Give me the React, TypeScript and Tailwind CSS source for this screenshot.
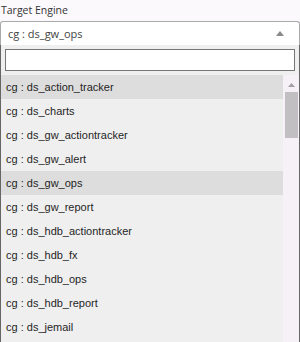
const items = [
  'cg : ds_action_tracker',
  'cg : ds_charts',
  'cg : ds_gw_actiontracker',
  'cg : ds_gw_alert',
  'cg : ds_gw_ops',
  'cg : ds_gw_report',
  'cg : ds_hdb_actiontracker',
  'cg : ds_hdb_fx',
  'cg : ds_hdb_ops',
  'cg : ds_hdb_report',
  'cg : ds_jemail',
];

export default function App() {
  return (
    <div className="flex h-[342px] w-[300px] flex-col overflow-hidden bg-[#fcf9fc]">
      {/* Label */}
      <div className="h-[21px] pl-[1px] pt-[2px] text-[10.5px] leading-[16px] text-[#333]" style={{ fontFamily: '"Open Sans", "Noto Sans", sans-serif' }}>
        Target Engine
      </div>

      {/* Select box */}
      <div className="flex h-[24px] flex-none items-center justify-between rounded-t-[3px] border border-b-0 border-[#aaa] bg-white pl-[7px] pr-[15px]">
        <span className="text-[11px] leading-none text-[#444]" style={{ fontFamily: '"Open Sans", "Noto Sans", sans-serif' }}>
          cg : ds_gw_ops
        </span>
        <svg width="8" height="5" viewBox="0 0 8 5">
          <path d="M0 5 L4 0 L8 5 Z" fill="#888" />
        </svg>
      </div>

      {/* Dropdown */}
      <div className="flex min-h-0 flex-1 flex-col border-x border-[#666] bg-[#efefef]">
        <div className="px-[4px] pt-[4px]">
          <input className="block h-[22px] w-full border border-[#767676] bg-white outline-none" />
        </div>
        <div className="mt-[4px] flex min-h-0 flex-1">
          <ul className="flex-1 overflow-hidden" style={{ fontFamily: '"Liberation Sans", Arial, sans-serif' }}>
            {items.map((item, i) => (
              <li
                key={item}
                className={`flex h-[24px] items-center px-[5px] text-[11px] text-[#1f1f1f] ${i === 0 || i === 4 ? 'bg-[#dddddd]' : ''}`}
              >
                {item}
              </li>
            ))}
          </ul>
          {/* Scrollbar */}
          <div className="flex w-[16px] flex-none flex-col items-center bg-[#f6f1f6]">
            <div className="flex h-[17px] items-center justify-center pt-[2px]">
              <svg width="7" height="4" viewBox="0 0 7 4">
                <path d="M0 4 L3.5 0 L7 4 Z" fill="#a3a0a3" />
              </svg>
            </div>
            <div className="ml-[1px] h-[46px] w-[13px] bg-[#c2bfc2]" />
          </div>
        </div>
      </div>
    </div>
  );
}
